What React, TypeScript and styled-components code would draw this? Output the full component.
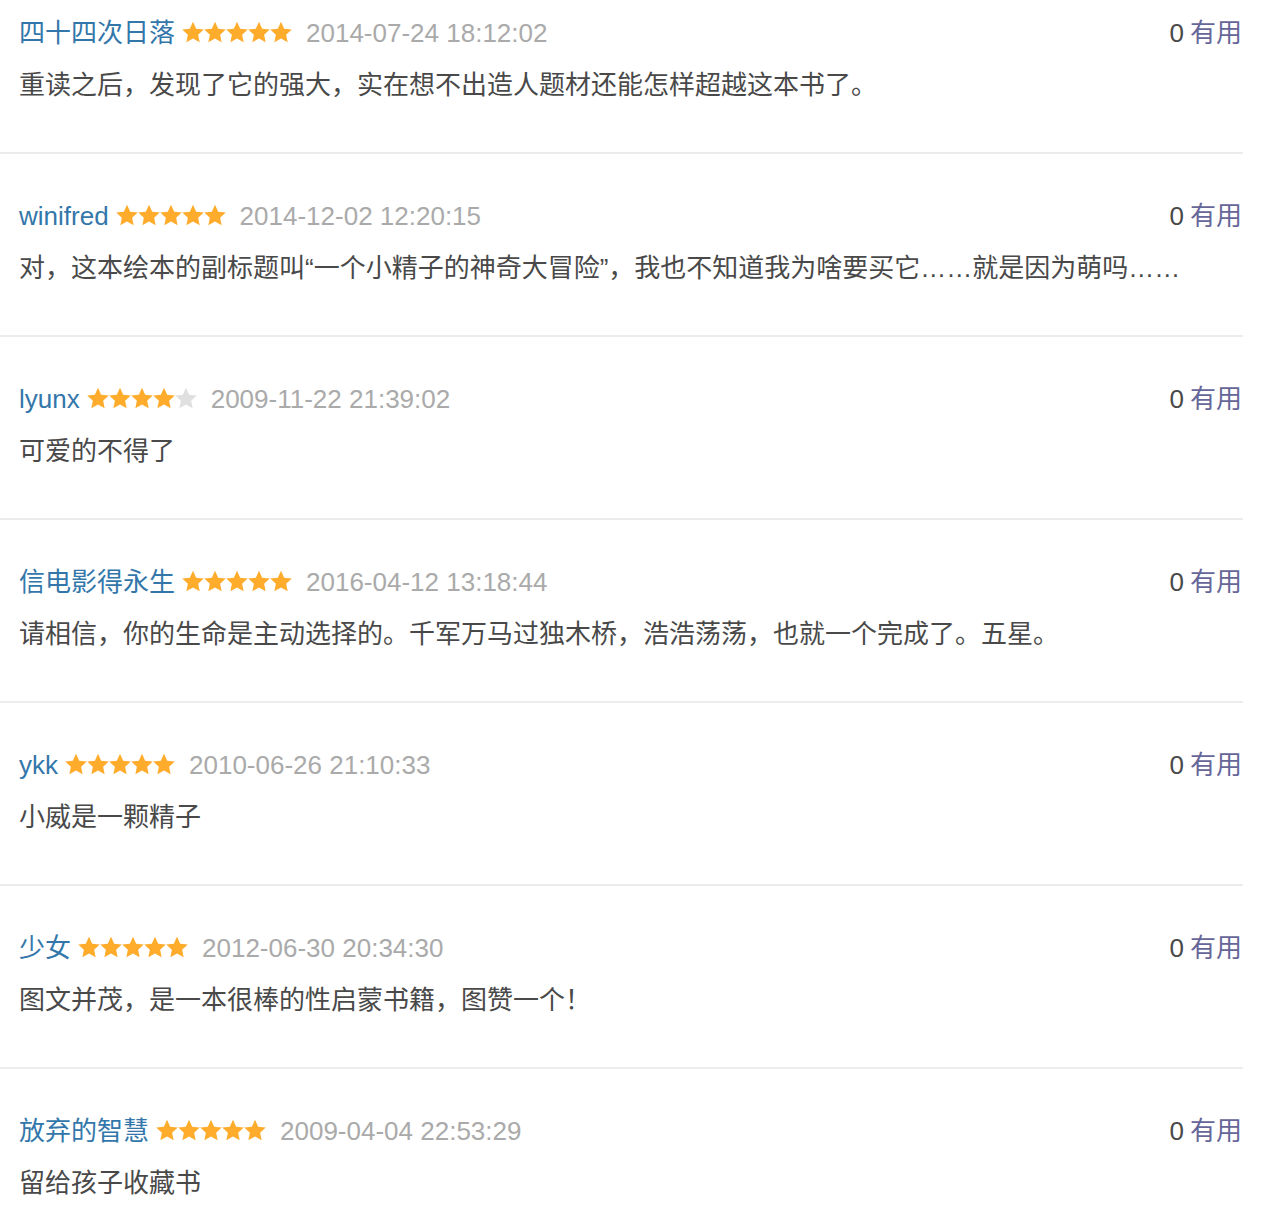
import React from "react";
import styled, { createGlobalStyle } from "styled-components";

type Comment = {
  user: string;
  rating: number;
  time: string;
  votes: number;
  text: string;
};

const comments: Comment[] = [
  {
    user: "四十四次日落",
    rating: 5,
    time: "2014-07-24 18:12:02",
    votes: 0,
    text: "重读之后，发现了它的强大，实在想不出造人题材还能怎样超越这本书了。",
  },
  {
    user: "winifred",
    rating: 5,
    time: "2014-12-02 12:20:15",
    votes: 0,
    text: "对，这本绘本的副标题叫“一个小精子的神奇大冒险”，我也不知道我为啥要买它……就是因为萌吗……",
  },
  {
    user: "lyunx",
    rating: 4,
    time: "2009-11-22 21:39:02",
    votes: 0,
    text: "可爱的不得了",
  },
  {
    user: "信电影得永生",
    rating: 5,
    time: "2016-04-12 13:18:44",
    votes: 0,
    text: "请相信，你的生命是主动选择的。千军万马过独木桥，浩浩荡荡，也就一个完成了。五星。",
  },
  {
    user: "ykk",
    rating: 5,
    time: "2010-06-26 21:10:33",
    votes: 0,
    text: "小威是一颗精子",
  },
  {
    user: "少女",
    rating: 5,
    time: "2012-06-30 20:34:30",
    votes: 0,
    text: "图文并茂，是一本很棒的性启蒙书籍，图赞一个！",
  },
  {
    user: "放弃的智慧",
    rating: 5,
    time: "2009-04-04 22:53:29",
    votes: 0,
    text: "留给孩子收藏书",
  },
];

// 星级评分图标
const StarIcon: React.FC<{ on: boolean }> = ({ on }) => (
  <svg width="22" height="22" viewBox="0 0 22 22">
    <path
      d="M11 0.8L14.18 7.73L21.75 8.61L16.14 13.77L17.64 21.24L11 17.5L4.36 21.24L5.86 13.77L0.25 8.61L7.82 7.73Z"
      fill={on ? "#ffac2d" : "#e0e0e0"}
    />
  </svg>
);

const App: React.FC = () => {
  return (
    <>
      <GlobalStyle />
      <List>
        {comments.map((c, i) => (
          <Item key={i}>
            <Header>
              <Meta>
                <UserName>{c.user}</UserName>
                <Stars>
                  {[1, 2, 3, 4, 5].map((n) => (
                    <StarIcon key={n} on={n <= c.rating} />
                  ))}
                </Stars>
                <Time>{c.time}</Time>
              </Meta>
              <Votes>
                <Count>{c.votes}</Count>
                <Useful>有用</Useful>
              </Votes>
            </Header>
            <Body>{c.text}</Body>
          </Item>
        ))}
      </List>
    </>
  );
};

export default App;

const GlobalStyle = createGlobalStyle`
  body {
    margin: 0;
    background: #fff;
    font-family: "Liberation Sans", "Noto Sans CJK SC", sans-serif;
  }
`;

const List = styled.div`
  width: 1243px;
`;

const Item = styled.div`
  padding: 44px 1px 49px 19px;
  border-bottom: 2px solid #ececec;

  &:first-child {
    padding-top: 15px;
  }
`;

const Header = styled.div`
  display: flex;
  align-items: center;
  justify-content: space-between;
  height: 36px;
`;

const Meta = styled.div`
  display: flex;
  align-items: center;
  font-size: 26px;
  line-height: 36px;
`;

const UserName = styled.a`
  color: #3377aa;
  text-decoration: none;
  margin-right: 7px;
`;

const Stars = styled.span`
  display: flex;
  align-items: center;
  margin-right: 14px;
  margin-top: -2px;
`;

const Time = styled.span`
  color: #aaa;
`;

const Votes = styled.div`
  display: flex;
  align-items: center;
  gap: 6px;
  font-size: 26px;
  line-height: 36px;
`;

const Count = styled.span`
  color: #494949;
`;

const Useful = styled.a`
  color: #666699;
  text-decoration: none;
`;

const Body = styled.p`
  margin: 16px 0 0;
  font-size: 26px;
  line-height: 36px;
  color: #494949;
`;
